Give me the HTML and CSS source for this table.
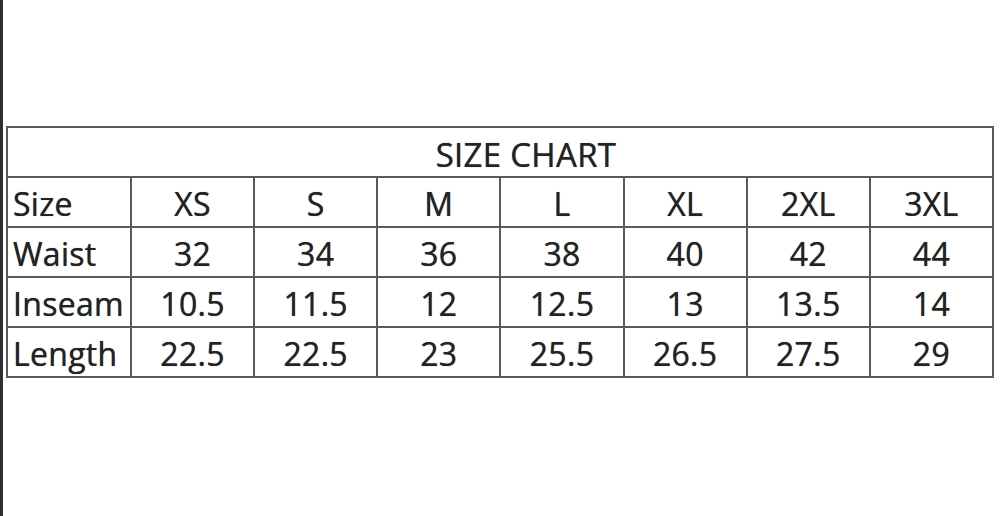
FILE: index.html
```html
<!DOCTYPE html>
<html>
<head>
<meta charset="utf-8">
<link rel="stylesheet" href="styles.css">
</head>
<body>
<div class="page">
  <div class="strip"></div>
  <div class="sheet">
    <table class="chart">
      <colgroup>
        <col class="c-label">
        <col span="7" class="c-val">
      </colgroup>
      <tr><td class="title" colspan="8">SIZE CHART</td></tr>
      <tr><td class="label">Size</td><td>XS</td><td>S</td><td>M</td><td>L</td><td>XL</td><td>2XL</td><td>3XL</td></tr>
      <tr><td class="label">Waist</td><td>32</td><td>34</td><td>36</td><td>38</td><td>40</td><td>42</td><td>44</td></tr>
      <tr><td class="label">Inseam</td><td>10.5</td><td>11.5</td><td>12</td><td>12.5</td><td>13</td><td>13.5</td><td>14</td></tr>
      <tr><td class="label">Length</td><td>22.5</td><td>22.5</td><td>23</td><td>25.5</td><td>26.5</td><td>27.5</td><td>29</td></tr>
    </table>
  </div>
</div>
</body>
</html>
```

FILE: styles.css
```css
html, body {
  margin: 0;
  padding: 0;
  background: #ffffff;
}
.page {
  display: flex;
  width: 1004px;
  height: 516px;
}
.strip {
  width: 3px;
  flex: 0 0 3px;
  background: #2f2f2f;
}
.sheet {
  padding: 126px 0 0 3px;
}
.chart {
  border-collapse: collapse;
  width: 988px;
  table-layout: fixed;
  font-family: "Open Sans", Lato, sans-serif;
  font-size: 32px;
  letter-spacing: 0.3px;
  color: #232323;
  text-shadow: 0 0 0.7px #3a3a3a;
}
.c-label { width: 124px; }
.chart td {
  border: 2px solid #5a5a5a;
  height: 50px;
  padding: 4px 0 0 0;
  box-sizing: border-box;
  text-align: center;
  vertical-align: middle;
  line-height: 1;
  white-space: nowrap;
  overflow: hidden;
}
.chart td.title {
  font-size: 33px;
  padding-left: 52px;
}
.chart td.label {
  text-align: left;
  padding-left: 5px;
}
```
